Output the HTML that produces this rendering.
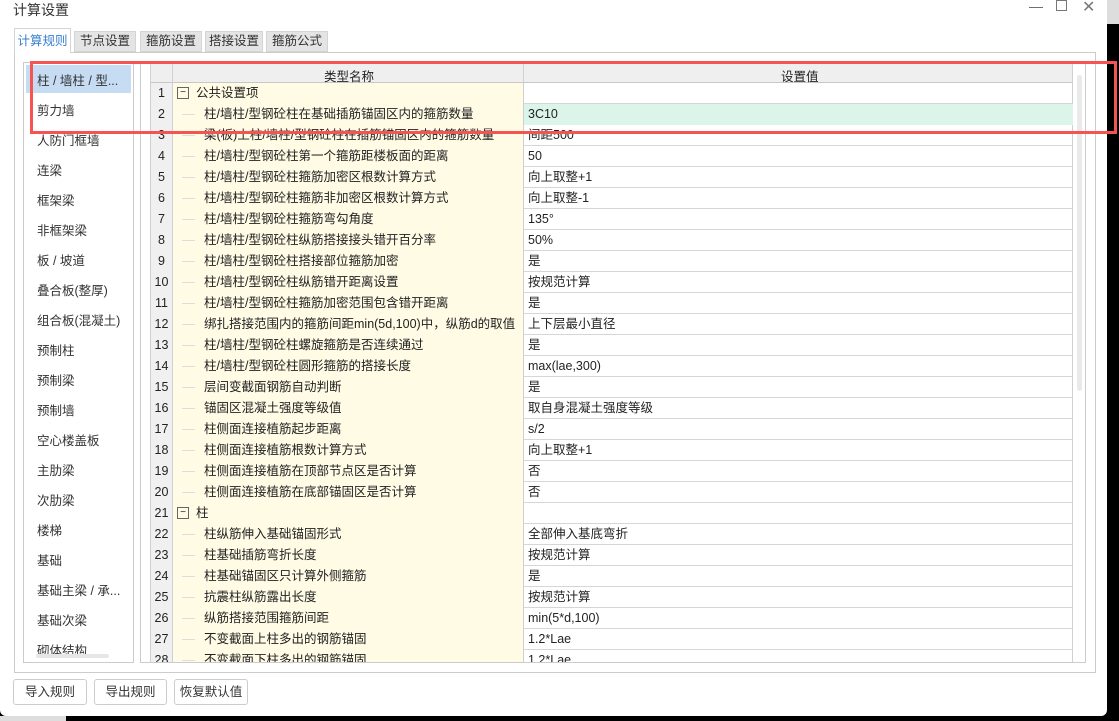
<!DOCTYPE html>
<html><head><meta charset="utf-8"><style>
*{margin:0;padding:0;box-sizing:border-box}
body{width:1119px;height:721px;overflow:hidden;background:#000;font-family:"Liberation Sans","Noto Sans CJK SC",sans-serif;font-size:12px;color:#222;position:relative}
.a{position:absolute}
#win{left:0;top:0;width:1107px;height:716px;background:#fff;border-radius:0 0 6px 6px}
.tab{top:31px;height:21px;background:#e4e4e4;border:1px solid #d4d4d4;text-align:center;line-height:19px;font-size:12.5px;color:#333}
.li{left:37px;font-size:12.5px;color:#333}
.r{left:10px;width:922px;height:21px;border-bottom:1px solid #d6d6d6}
.n{position:absolute;left:0;width:22px;height:21px;background:#f0f0f0;border-right:1px solid #d0d0d0;text-align:center;line-height:21px;font-size:12.5px}
.k{position:absolute;left:22px;width:351px;height:21px;background:#fffbe5;border-right:1px solid #d0d0d0;line-height:21px;padding-left:31px;font-size:12.5px;white-space:nowrap;overflow:hidden}
.k:before{content:"";position:absolute;left:9px;top:10px;width:13px;border-top:1px solid #ddd}
.k.g{padding-left:23px}.k.g:before{display:none}
.box{position:absolute;left:4px;top:4px;width:12px;height:12px;border:1px solid #666;font-size:10px;line-height:9px;text-align:center}
.v{position:absolute;left:373px;width:549px;height:21px;line-height:21px;padding-left:4px;font-size:12.5px}
.btn{top:679px;height:26px;border:1px solid #ccc;border-radius:3px;text-align:center;line-height:24px;font-size:12.5px;color:#333;background:#fff}
</style></head><body>
<div class="a" style="left:1107px;top:0;width:12px;height:24px;background:#ddd"></div>
<div id="win" class="a"></div>
<div class="a" style="left:0;top:716px;width:66px;height:5px;background:#ddd"></div>
<div class="a" style="left:13px;top:0;font-size:14px;color:#333">计算设置</div>
<div class="a" style="left:1029px;top:-2px;font-size:14px;color:#666">—</div>
<div class="a" style="left:1056px;top:0;width:11px;height:11px;border:1px solid #777"></div>
<div class="a" style="left:1082px;top:-3px;font-size:16px;color:#777">✕</div>
<div class="a" style="left:14px;top:52px;width:1082px;height:621px;border:1px solid #ccc"></div>
<div class="a tab" style="left:14px;top:28px;width:57px;height:25px;background:#fff;border-bottom:none;color:#3a7fd0;line-height:24px">计算规则</div>
<div class="a tab" style="left:74px;width:62px">节点设置</div>
<div class="a tab" style="left:140px;width:62px">箍筋设置</div>
<div class="a tab" style="left:205px;width:58px">搭接设置</div>
<div class="a tab" style="left:266px;width:62px">箍筋公式</div>
<div class="a" style="left:23px;top:62px;width:111px;height:601px;border:1px solid #ccc;overflow:hidden">
<div class="a" style="left:2px;top:2px;width:105px;height:28px;background:#c6dcf3"></div>
<div class="a" style="left:111px;top:12px;width:5px;height:560px;background:#eee;border-radius:3px"></div>
<div class="a" style="left:12px;top:591px;width:73px;height:4px;background:#e6e6e6;border-radius:2px"></div>
</div>
<div class="a li" style="top:70px">柱 / 墙柱 / 型...</div>
<div class="a li" style="top:100px">剪力墙</div>
<div class="a li" style="top:130px">人防门框墙</div>
<div class="a li" style="top:160px">连梁</div>
<div class="a li" style="top:190px">框架梁</div>
<div class="a li" style="top:220px">非框架梁</div>
<div class="a li" style="top:250px">板 / 坡道</div>
<div class="a li" style="top:280px">叠合板(整厚)</div>
<div class="a li" style="top:310px">组合板(混凝土)</div>
<div class="a li" style="top:340px">预制柱</div>
<div class="a li" style="top:370px">预制梁</div>
<div class="a li" style="top:400px">预制墙</div>
<div class="a li" style="top:430px">空心楼盖板</div>
<div class="a li" style="top:460px">主肋梁</div>
<div class="a li" style="top:490px">次肋梁</div>
<div class="a li" style="top:520px">楼梯</div>
<div class="a li" style="top:550px">基础</div>
<div class="a li" style="top:580px">基础主梁 / 承...</div>
<div class="a li" style="top:610px">基础次梁</div>
<div class="a li" style="top:640px;height:14px;overflow:hidden">砌体结构</div>
<div class="a" style="left:140px;top:62px;width:946px;height:601px;border:1px solid #ccc;overflow:hidden">
<div class="a" style="left:9px;top:0;width:923px;height:20px;background:#efefef;border-bottom:1px solid #c8c8c8"></div>
<div class="a" style="left:31px;top:0;height:600px;border-left:1px solid #d0d0d0"></div>
<div class="a" style="left:382px;top:0;height:600px;border-left:1px solid #d0d0d0"></div>
<div class="a" style="left:931px;top:0;height:600px;border-left:1px solid #d0d0d0"></div>
<div class="a" style="left:9px;top:0;height:600px;border-left:1px solid #d0d0d0"></div>
<div class="a" style="left:936px;top:12px;width:5px;height:316px;background:#eaeaea;border-radius:3px"></div>
<div class="a" style="left:183px;top:3px;font-size:12.5px">类型名称</div>
<div class="a" style="left:640px;top:3px;font-size:12.5px">设置值</div>
<div class="a r" style="top:20px"><div class="n">1</div><div class="k g"><span class="box">−</span>公共设置项</div><div class="v"></div></div>
<div class="a r" style="top:41px"><div class="n">2</div><div class="k">柱/墙柱/型钢砼柱在基础插筋锚固区内的箍筋数量</div><div class="v" style="background:#dcf5eb">3C10</div></div>
<div class="a r" style="top:62px"><div class="n">3</div><div class="k">梁(板)上柱/墙柱/型钢砼柱在插筋锚固区内的箍筋数量</div><div class="v">间距500</div></div>
<div class="a r" style="top:83px"><div class="n">4</div><div class="k">柱/墙柱/型钢砼柱第一个箍筋距楼板面的距离</div><div class="v">50</div></div>
<div class="a r" style="top:104px"><div class="n">5</div><div class="k">柱/墙柱/型钢砼柱箍筋加密区根数计算方式</div><div class="v">向上取整+1</div></div>
<div class="a r" style="top:125px"><div class="n">6</div><div class="k">柱/墙柱/型钢砼柱箍筋非加密区根数计算方式</div><div class="v">向上取整-1</div></div>
<div class="a r" style="top:146px"><div class="n">7</div><div class="k">柱/墙柱/型钢砼柱箍筋弯勾角度</div><div class="v">135°</div></div>
<div class="a r" style="top:167px"><div class="n">8</div><div class="k">柱/墙柱/型钢砼柱纵筋搭接接头错开百分率</div><div class="v">50%</div></div>
<div class="a r" style="top:188px"><div class="n">9</div><div class="k">柱/墙柱/型钢砼柱搭接部位箍筋加密</div><div class="v">是</div></div>
<div class="a r" style="top:209px"><div class="n">10</div><div class="k">柱/墙柱/型钢砼柱纵筋错开距离设置</div><div class="v">按规范计算</div></div>
<div class="a r" style="top:230px"><div class="n">11</div><div class="k">柱/墙柱/型钢砼柱箍筋加密范围包含错开距离</div><div class="v">是</div></div>
<div class="a r" style="top:251px"><div class="n">12</div><div class="k">绑扎搭接范围内的箍筋间距min(5d,100)中，纵筋d的取值</div><div class="v">上下层最小直径</div></div>
<div class="a r" style="top:272px"><div class="n">13</div><div class="k">柱/墙柱/型钢砼柱螺旋箍筋是否连续通过</div><div class="v">是</div></div>
<div class="a r" style="top:293px"><div class="n">14</div><div class="k">柱/墙柱/型钢砼柱圆形箍筋的搭接长度</div><div class="v">max(lae,300)</div></div>
<div class="a r" style="top:314px"><div class="n">15</div><div class="k">层间变截面钢筋自动判断</div><div class="v">是</div></div>
<div class="a r" style="top:335px"><div class="n">16</div><div class="k">锚固区混凝土强度等级值</div><div class="v">取自身混凝土强度等级</div></div>
<div class="a r" style="top:356px"><div class="n">17</div><div class="k">柱侧面连接植筋起步距离</div><div class="v">s/2</div></div>
<div class="a r" style="top:377px"><div class="n">18</div><div class="k">柱侧面连接植筋根数计算方式</div><div class="v">向上取整+1</div></div>
<div class="a r" style="top:398px"><div class="n">19</div><div class="k">柱侧面连接植筋在顶部节点区是否计算</div><div class="v">否</div></div>
<div class="a r" style="top:419px"><div class="n">20</div><div class="k">柱侧面连接植筋在底部锚固区是否计算</div><div class="v">否</div></div>
<div class="a r" style="top:440px"><div class="n">21</div><div class="k g"><span class="box">−</span>柱</div><div class="v"></div></div>
<div class="a r" style="top:461px"><div class="n">22</div><div class="k">柱纵筋伸入基础锚固形式</div><div class="v">全部伸入基底弯折</div></div>
<div class="a r" style="top:482px"><div class="n">23</div><div class="k">柱基础插筋弯折长度</div><div class="v">按规范计算</div></div>
<div class="a r" style="top:503px"><div class="n">24</div><div class="k">柱基础锚固区只计算外侧箍筋</div><div class="v">是</div></div>
<div class="a r" style="top:524px"><div class="n">25</div><div class="k">抗震柱纵筋露出长度</div><div class="v">按规范计算</div></div>
<div class="a r" style="top:545px"><div class="n">26</div><div class="k">纵筋搭接范围箍筋间距</div><div class="v">min(5*d,100)</div></div>
<div class="a r" style="top:566px"><div class="n">27</div><div class="k">不变截面上柱多出的钢筋锚固</div><div class="v">1.2*Lae</div></div>
<div class="a r" style="top:587px"><div class="n">28</div><div class="k">不变截面下柱多出的钢筋锚固</div><div class="v">1.2*Lae</div></div>
</div>
<div class="a" style="left:30px;top:61px;width:1087px;height:73px;border:3px solid #f55452"></div>
<div class="a btn" style="left:13px;width:74px">导入规则</div>
<div class="a btn" style="left:94px;width:73px">导出规则</div>
<div class="a btn" style="left:174px;width:74px">恢复默认值</div>
</body></html>
